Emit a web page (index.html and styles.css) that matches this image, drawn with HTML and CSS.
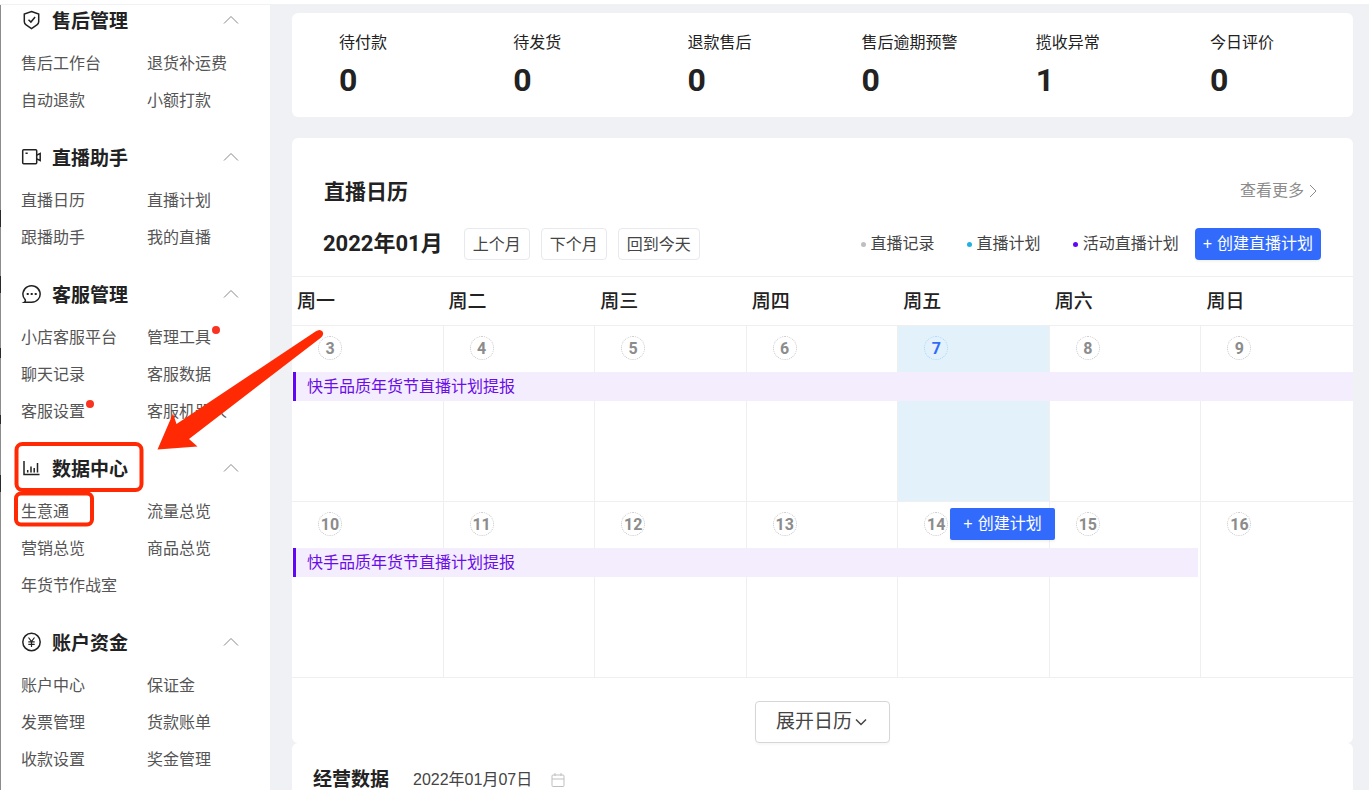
FILE: index.html
```html
<!DOCTYPE html>
<html lang="zh-CN">
<head>
<meta charset="utf-8">
<title>快手小店</title>
<link rel="stylesheet" href="styles.css">
</head>
<body>
<div class="page">
  <nav class="sidebar">
    <section class="group">
      <button class="group-head" type="button">
        <svg class="group-icon" viewBox="0 0 20 20"><path d="M10.500 1.500 17.700 4v7.800c0 1.400-.6 2.300-1.800 3.100l-5.400 3.700-5.400-3.700c-1.200-.8-1.800-1.700-1.800-3.100V4z"/><path d="m7.500 9.800 2.400 2.300 4.200-5"/></svg>
        <span class="group-title">售后管理</span>
        <svg class="caret" viewBox="0 0 16 10"><path d="m1 8.500 7-7 7 7"/></svg>
      </button>
      <div class="links"><a href="#">售后工作台</a><a href="#">退货补运费</a><a href="#">自动退款</a><a href="#">小额打款</a></div>
    </section>
    <section class="group">
      <button class="group-head" type="button">
        <svg class="group-icon" viewBox="0 0 20 20"><rect x="1.700" y="2.700" width="14" height="14" rx="1"/><path d="M4.500 6.300h2.200M15.700 8.200l3.500-1.700v7l-3.500-1.700"/></svg>
        <span class="group-title">直播助手</span>
        <svg class="caret" viewBox="0 0 16 10"><path d="m1 8.500 7-7 7 7"/></svg>
      </button>
      <div class="links"><a href="#">直播日历</a><a href="#">直播计划</a><a href="#">跟播助手</a><a href="#">我的直播</a></div>
    </section>
    <section class="group">
      <button class="group-head" type="button">
        <svg class="group-icon" viewBox="0 0 20 20"><path d="M3.200 18.300c1.300-.8 1.500-2 .7-3A8.600 8.300 0 1 1 10.600 18.300z"/><path class="dots" d="M5.700 9h2v2h-2zM9.700 9h2v2h-2zM13.700 9h2v2h-2z"/></svg>
        <span class="group-title">客服管理</span>
        <svg class="caret" viewBox="0 0 16 10"><path d="m1 8.500 7-7 7 7"/></svg>
      </button>
      <div class="links"><a href="#">小店客服平台</a><a href="#" class="has-dot">管理工具</a><a href="#">聊天记录</a><a href="#">客服数据</a><a href="#" class="has-dot">客服设置</a><a href="#">客服机器人</a></div>
    </section>
    <section class="group">
      <button class="group-head" type="button">
        <svg class="group-icon" viewBox="0 0 20 20"><path d="M3 3v13.500h15.500M6.700 12v2.500M10 8.500v6M13.200 10v4.500M16.500 5v9.500"/></svg>
        <span class="group-title">数据中心</span>
        <svg class="caret" viewBox="0 0 16 10"><path d="m1 8.500 7-7 7 7"/></svg>
      </button>
      <div class="links"><a href="#">生意通</a><a href="#">流量总览</a><a href="#">营销总览</a><a href="#">商品总览</a><a href="#">年货节作战室</a></div>
    </section>
    <section class="group">
      <button class="group-head" type="button">
        <svg class="group-icon" viewBox="0 0 20 20"><circle cx="10.500" cy="10" r="8.700"/><path class="thin" d="m7.500 5.500 3 4 3-4M10.500 9.500V15M7.300 9.800h6.400M7.300 12.300h6.400"/></svg>
        <span class="group-title">账户资金</span>
        <svg class="caret" viewBox="0 0 16 10"><path d="m1 8.500 7-7 7 7"/></svg>
      </button>
      <div class="links"><a href="#">账户中心</a><a href="#">保证金</a><a href="#">发票管理</a><a href="#">货款账单</a><a href="#">收款设置</a><a href="#">奖金管理</a></div>
    </section>
  </nav>

  <main class="main">
    <section class="card stats">
      <div><div class="stat-label">待付款</div><div class="stat-value">0</div></div>
      <div><div class="stat-label">待发货</div><div class="stat-value">0</div></div>
      <div><div class="stat-label">退款售后</div><div class="stat-value">0</div></div>
      <div><div class="stat-label">售后逾期预警</div><div class="stat-value">0</div></div>
      <div><div class="stat-label">揽收异常</div><div class="stat-value">1</div></div>
      <div><div class="stat-label">今日评价</div><div class="stat-value">0</div></div>
    </section>

    <section class="card calendar">
      <header class="cal-top">
        <h2 class="cal-title">直播日历</h2>
        <a class="more" href="#">查看更多<svg viewBox="0 0 8 14"><path d="m1 1 6 6-6 6"/></svg></a>
      </header>
      <div class="cal-bar">
        <h3 class="month">2022年01月</h3>
        <div class="month-nav">
          <button class="btn" type="button">上个月</button>
          <button class="btn" type="button">下个月</button>
          <button class="btn" type="button">回到今天</button>
        </div>
        <ul class="legend">
          <li class="record">直播记录</li>
          <li class="plan">直播计划</li>
          <li class="campaign">活动直播计划</li>
        </ul>
        <button class="primary" type="button"><span class="plus">+</span>创建直播计划</button>
      </div>
      <div class="weekdays"><span>周一</span><span>周二</span><span>周三</span><span>周四</span><span>周五</span><span>周六</span><span>周日</span></div>
      <div class="week">
        <div class="day"><span class="date">3</span></div>
        <div class="day"><span class="date">4</span></div>
        <div class="day"><span class="date">5</span></div>
        <div class="day"><span class="date">6</span></div>
        <div class="day today"><span class="date">7</span></div>
        <div class="day"><span class="date">8</span></div>
        <div class="day"><span class="date">9</span></div>
        <a class="event full" href="#">快手品质年货节直播计划提报</a>
      </div>
      <div class="week">
        <div class="day"><span class="date">10</span></div>
        <div class="day"><span class="date">11</span></div>
        <div class="day"><span class="date">12</span></div>
        <div class="day"><span class="date">13</span></div>
        <div class="day"><span class="date">14</span><button class="primary create" type="button"><span class="plus">+</span>创建计划</button></div>
        <div class="day"><span class="date">15</span></div>
        <div class="day"><span class="date">16</span></div>
        <a class="event part" href="#">快手品质年货节直播计划提报</a>
      </div>
      <div class="expand-row">
        <button class="expand" type="button">展开日历<svg viewBox="0 0 12 8"><path d="m1 1.500 5 5 5-5"/></svg></button>
      </div>
    </section>

    <section class="card business">
      <h2 class="business-title">经营数据</h2>
      <time class="business-date" datetime="2022-01-07">2022年01月07日</time>
      <svg class="cal-icon" viewBox="0 0 14 16"><rect x="1" y="3" width="12" height="11.500" rx="1"/><path d="M1 7h12M4 1v3M10 1v3"/></svg>
    </section>
  </main>

  <svg class="marks" width="340" height="540" viewBox="0 0 340 540">
    <rect x="16.500" y="444" width="125" height="46" rx="6"/>
    <rect x="16" y="493.500" width="76" height="31" rx="5"/>
    <path class="arrow" d="M157.500 449.500 173 413.500 176.500 424 315.500 331.500Q320 328.500 322.500 331.500Q324.500 335 320.500 338L189 439 197.500 446.500z"/>
  </svg>
</div>
</body>
</html>
```
FILE: styles.css
```css
* { box-sizing: border-box; }

body {
  margin: 0;
  height: 100vh;
  overflow: hidden;
  background: #f0f1f5;
  color: #222;
  font: 16px/24px "Liberation Sans", "Noto Sans CJK SC", sans-serif;
}

h2, h3, ul { margin: 0; padding: 0; }
a { color: inherit; text-decoration: none; }
button { font: inherit; color: inherit; cursor: pointer; }
svg { fill: none; stroke: currentColor; flex: none; }

.page {
  position: relative;
  display: flex;
  min-height: 100vh;
  border-top: 4px solid #fff;
}

/* Sidebar */
.sidebar {
  --edge: #8c8c8c;
  --gap: #2a2a2a;
  flex: none;
  width: 270px;
  padding: 2px 0 0 21px;
  background:
    linear-gradient(var(--edge) 206px, var(--gap) 206px 223px, var(--edge) 223px 272px,
      var(--gap) 272px 289px, var(--edge) 289px 344px, var(--gap) 344px 354px,
      var(--edge) 354px 411px, var(--gap) 411px 420px, var(--edge) 420px 471px,
      var(--gap) 471px 488px, var(--edge) 488px) 0 0 / 1px 100% no-repeat,
    #fff;
  box-shadow: inset 0 1px #f0f1f5;
}
.group { margin-bottom: 24px; }
.group-head {
  display: flex;
  align-items: center;
  width: 218px;
  height: 28px;
  margin-bottom: 11px;
  padding: 0;
  border: 0;
  background: none;
  text-align: left;
}
.group-icon { width: 20px; height: 20px; margin-right: 11px; stroke-width: 1.5; }
.dots { fill: currentColor; stroke: none; }
.thin { stroke-width: 1.2; }
.group-title {
  flex: 1;
  padding-top: 3px;
  font-size: 19px;
  font-weight: 700;
  line-height: 25px;
}
.caret { width: 16px; height: 10px; color: #888; }
.links {
  display: grid;
  grid-template-columns: 126px 1fr;
  grid-auto-rows: 37px;
  align-items: center;
  justify-items: start;
  color: #555;
}
.has-dot { position: relative; }
.has-dot::after {
  content: "";
  position: absolute;
  top: 0;
  right: -9px;
  width: 8px;
  height: 8px;
  border-radius: 50%;
  background: #fa3320;
}

/* Main column */
.main { flex: 1; min-width: 0; padding: 9px 16px 0 22px; }
.card { background: #fff; border-radius: 6px; }

.stats {
  display: grid;
  grid-template-columns: repeat(5, 1fr) 143px;
  margin-bottom: 21px;
  padding: 18px 0 17px 47px;
}
.stat-label { margin-bottom: 5px; }
.stat-value { font: bold 32px/40px "Roboto", sans-serif; }

.cal-top {
  display: flex;
  align-items: center;
  justify-content: space-between;
  padding: 38px 36px 0 32px;
}
.cal-title { font-size: 21px; font-weight: 700; line-height: 32px; }
.more {
  display: flex;
  align-items: center;
  gap: 5px;
  padding-bottom: 3px;
  color: #8c8c8c;
}
.more svg { width: 8px; height: 14px; }

.cal-bar {
  display: flex;
  align-items: center;
  padding: 20px 32px 16px 31px;
}
.month {
  margin-right: 21px;
  font: 700 22px/32px "Roboto", "Noto Sans CJK SC", sans-serif;
}
.month-nav { display: flex; gap: 11px; }
.btn {
  height: 32px;
  padding: 2px 8px 0;
  border: 1px solid #e8e9ee;
  border-radius: 4px;
  background: #fff;
  color: #444;
}
.legend {
  display: flex;
  gap: 32px;
  margin: 0 16px 0 auto;
  list-style: none;
  color: #444;
}
.legend li { display: flex; align-items: center; gap: 5px; }
.legend li::before {
  content: "";
  width: 5px;
  height: 5px;
  border-radius: 50%;
  background: #bfbfbf;
}
.legend .plan::before { background: #1eb1e1; }
.legend .campaign::before { background: #6206f5; }
.primary {
  height: 32px;
  padding: 0 8px;
  border: 0;
  border-radius: 4px;
  background: #326bfb;
  box-shadow: 0 2px 2px #0000000b;
  color: #fff;
  white-space: nowrap;
}
.plus { margin-right: 5px; }

.weekdays, .week {
  display: grid;
  grid-template-columns: repeat(7, minmax(0, 1fr));
  border-top: 1px solid #efefef;
}
.weekdays {
  padding: 11px 0 9px;
  font-size: 19px;
  font-weight: 500;
  line-height: 28px;
}
.weekdays span { padding-left: 5px; }
.week { grid-template-rows: 46px 29px 100px; }
.day {
  position: relative;
  grid-row: 1 / 4;
  padding: 10px 0 0 26px;
  border-right: 1px solid #efefef;
}
.day:nth-child(1) { grid-column: 1; }
.day:nth-child(2) { grid-column: 2; }
.day:nth-child(3) { grid-column: 3; }
.day:nth-child(4) { grid-column: 4; }
.day:nth-child(5) { grid-column: 5; }
.day:nth-child(6) { grid-column: 6; }
.day:nth-child(7) { grid-column: 7; border-right: 0; }
.date {
  display: block;
  width: 24px;
  height: 24px;
  border: 1px dotted #c8c8c8;
  border-radius: 50%;
  color: #8c8c8c;
  font: bold 16px/24px "Roboto", sans-serif;
  text-align: center;
}
.today { background: #e3f2fa; }
.today .date { border-color: #a9d7ff; color: #326bfb; }
.event {
  grid-row: 2;
  z-index: 1;
  margin-left: 1px;
  padding-left: 11px;
  border-left: 3px solid #6206f5;
  background: #f4edfe;
  color: #6a0ee8;
  line-height: 29px;
}
.full { grid-column: 1 / 8; }
.part { grid-column: 1 / 7; margin-right: 3px; }
.create {
  position: absolute;
  z-index: 2;
  top: 6px;
  left: 52px;
  padding: 0 13px;
  border-radius: 2px;
}

.expand-row {
  display: flex;
  justify-content: center;
  padding-top: 23px;
  border-top: 1px solid #efefef;
}
.expand {
  display: flex;
  align-items: center;
  gap: 3px;
  height: 42px;
  padding: 0 22px 0 20px;
  border: 1px solid #d6d6d6;
  border-radius: 4px;
  background: #fff;
  box-shadow: 0 2px 2px #00000008;
  color: #444;
  font-size: 19px;
}
.expand svg { width: 12px; height: 8px; stroke-width: 1.5; }

.business { display: flex; align-items: center; padding: 23px 21px; }
.business-title { margin-right: 24px; font-size: 19px; font-weight: 700; line-height: 28px; }
.business-date { margin-right: 19px; color: #444; }
.cal-icon { width: 14px; height: 16px; color: #bfbfbf; }

/* Callouts drawn over the page */
.marks {
  position: absolute;
  z-index: 3;
  top: -4px;
  left: 0;
  color: #ff2a04;
  stroke-width: 4;
  pointer-events: none;
}
.arrow { fill: currentColor; stroke: none; }
```
